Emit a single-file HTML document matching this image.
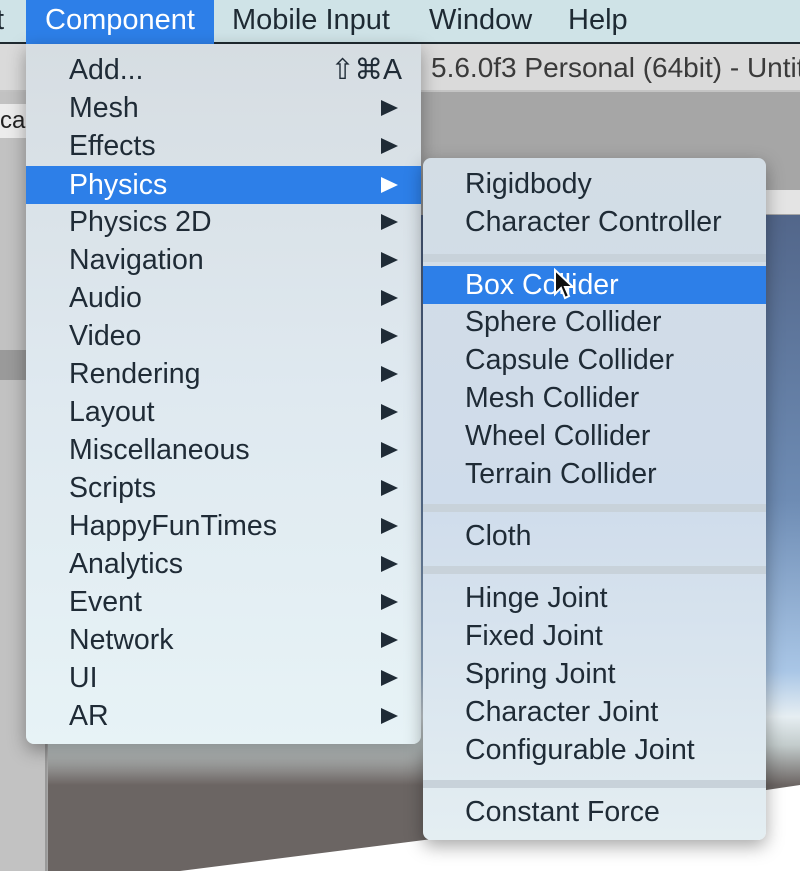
<!DOCTYPE html>
<html><head><style>
body{margin:0;width:800px;height:871px;overflow:hidden;position:relative;background:#a6a6a6;font-family:"Liberation Sans",sans-serif;}
.abs{position:absolute}
.menubar{left:0;top:0;width:800px;height:44px;background:#cfe3e7;border-bottom:2px solid #1f2a30;box-sizing:border-box}
.mb{position:absolute;top:4px;font-size:29px;color:#1e2a33}
.menu{position:absolute;box-shadow:0 6px 18px rgba(0,0,0,.35);border-radius:0 0 8px 8px}
.item{position:absolute;left:0;right:0;height:38px;line-height:38px;font-size:28.5px;color:#1f2b36;white-space:nowrap}
.item.sel{background:#2d7fe8;color:#fff}
.arrow{position:absolute;right:23px;top:11px;width:0;height:0;border-top:8px solid transparent;border-bottom:8px solid transparent;border-left:17px solid #1f2b36}
.sel .arrow{border-left-color:#fff}
.sep{position:absolute;left:0;right:0;height:8px;background:#c8d2da}
</style></head><body>
<div class="abs" style="left:0;top:44px;width:800px;height:46px;background:#dadada;border-bottom:2px solid #c4c4c4"></div>
<div class="abs" style="left:431px;top:52px;font-size:28px;color:#3a3a3a;white-space:nowrap">5.6.0f3 Personal (64bit) - Untit</div>
<div class="abs" style="left:0;top:92px;width:45px;height:779px;background:#c2c2c2;border-right:2px solid #999"></div>
<div class="abs" style="left:0;top:104px;width:30px;height:34px;background:#ececec;font-size:24px;line-height:34px;color:#222">ca</div>
<div class="abs" style="left:0;top:350px;width:45px;height:30px;background:#9a9a9a"></div>
<div class="abs" style="left:760px;top:190px;width:40px;height:24px;background:#e4e4e4"></div>
<div class="abs" style="left:48px;top:215px;width:752px;height:570px;background:linear-gradient(#52668a 0%,#6e8cb4 50%,#a9c6e6 80%,#e6eef2 88%,#c3cccc 93%,#6c6563 100%)"></div>
<div class="abs" style="left:48px;top:785px;width:752px;height:86px;background:#6b6563"></div>
<div class="abs" style="left:0;top:0;width:800px;height:871px;background:#fff;clip-path:polygon(800px 785px,800px 871px,180px 871px,440px 838px)"></div>
<div class="abs menubar"></div>
<div class="mb" style="left:-4px">t</div>
<div class="abs" style="left:26px;top:0;width:188px;height:44px;background:#2d7fe8"></div>
<div class="mb" style="left:45px;color:#fff">Component</div>
<div class="mb" style="left:232px">Mobile Input</div>
<div class="mb" style="left:429px">Window</div>
<div class="mb" style="left:568px">Help</div>
<div class="menu" style="left:26px;top:44px;width:395px;height:700px;background:linear-gradient(#d6dde2,#dfe9f0 50%,#e7f3f6)">
<div class="item" style="top:7px;padding-left:43px">Add...<span style="position:absolute;right:19px">⇧⌘A</span></div>
<div class="item" style="top:45px;padding-left:43px">Mesh<span class="arrow"></span></div>
<div class="item" style="top:83px;padding-left:43px">Effects<span class="arrow"></span></div>
<div class="item sel" style="top:122px;padding-left:43px">Physics<span class="arrow"></span></div>
<div class="item" style="top:159px;padding-left:43px">Physics 2D<span class="arrow"></span></div>
<div class="item" style="top:197px;padding-left:43px">Navigation<span class="arrow"></span></div>
<div class="item" style="top:235px;padding-left:43px">Audio<span class="arrow"></span></div>
<div class="item" style="top:273px;padding-left:43px">Video<span class="arrow"></span></div>
<div class="item" style="top:311px;padding-left:43px">Rendering<span class="arrow"></span></div>
<div class="item" style="top:349px;padding-left:43px">Layout<span class="arrow"></span></div>
<div class="item" style="top:387px;padding-left:43px">Miscellaneous<span class="arrow"></span></div>
<div class="item" style="top:425px;padding-left:43px">Scripts<span class="arrow"></span></div>
<div class="item" style="top:463px;padding-left:43px">HappyFunTimes<span class="arrow"></span></div>
<div class="item" style="top:501px;padding-left:43px">Analytics<span class="arrow"></span></div>
<div class="item" style="top:539px;padding-left:43px">Event<span class="arrow"></span></div>
<div class="item" style="top:577px;padding-left:43px">Network<span class="arrow"></span></div>
<div class="item" style="top:615px;padding-left:43px">UI<span class="arrow"></span></div>
<div class="item" style="top:653px;padding-left:43px">AR<span class="arrow"></span></div>
</div>
<div class="menu" style="left:423px;top:158px;width:343px;height:682px;border-radius:8px;background:linear-gradient(#d3dde5,#cfdceb 50%,#e4eef2)">
<div class="item" style="top:7px;padding-left:42px">Rigidbody</div>
<div class="item" style="top:45px;padding-left:42px">Character Controller</div>
<div class="sep" style="top:96px"></div>
<div class="item sel" style="top:108px;padding-left:42px">Box Collider</div>
<div class="item" style="top:145px;padding-left:42px">Sphere Collider</div>
<div class="item" style="top:183px;padding-left:42px">Capsule Collider</div>
<div class="item" style="top:221px;padding-left:42px">Mesh Collider</div>
<div class="item" style="top:259px;padding-left:42px">Wheel Collider</div>
<div class="item" style="top:297px;padding-left:42px">Terrain Collider</div>
<div class="sep" style="top:346px"></div>
<div class="item" style="top:359px;padding-left:42px">Cloth</div>
<div class="sep" style="top:408px"></div>
<div class="item" style="top:421px;padding-left:42px">Hinge Joint</div>
<div class="item" style="top:459px;padding-left:42px">Fixed Joint</div>
<div class="item" style="top:497px;padding-left:42px">Spring Joint</div>
<div class="item" style="top:535px;padding-left:42px">Character Joint</div>
<div class="item" style="top:573px;padding-left:42px">Configurable Joint</div>
<div class="sep" style="top:622px"></div>
<div class="item" style="top:635px;padding-left:42px">Constant Force</div>
</div>
<svg class="abs" style="left:553px;top:268px" width="22" height="34" viewBox="0 0 22 34"><path d="M2 2 L2 26 L8 20 L12 30 L16 28 L12 19 L20 19 Z" fill="#111" stroke="#fff" stroke-width="2"/></svg>
</body></html>
